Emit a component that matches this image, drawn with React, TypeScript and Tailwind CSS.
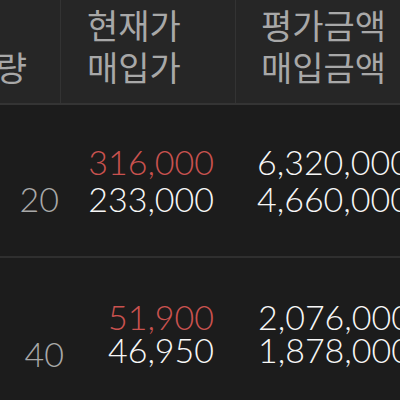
import React from "react";

const kr = { fontFamily: '"Noto Sans CJK KR", "Noto Sans", sans-serif' };
const lato = { fontFamily: '"Lato", sans-serif' };

export default function App() {
  return (
    <div className="w-[400px] h-[400px] overflow-hidden bg-[#1c1c1c]">
      {/* header */}
      <div className="flex h-[105px] bg-[#262626] border-b-2 border-[#343434] text-[34px] leading-[42px] text-[#a8a8a8]" style={kr}>
        <div className="w-[61px] shrink-0 overflow-hidden flex flex-col items-end pt-[4px] pr-[33px] border-r border-[#333]">
          <div className="whitespace-nowrap">&nbsp;</div>
          <div className="whitespace-nowrap">보유수량</div>
        </div>
        <div className="w-[175px] shrink-0 flex flex-col pt-[4px] pl-[26px] border-r border-[#333]">
          <div className="whitespace-nowrap">현재가</div>
          <div className="whitespace-nowrap">매입가</div>
        </div>
        <div className="flex-1 flex flex-col pt-[4px] pl-[25px] overflow-hidden">
          <div className="whitespace-nowrap">평가금액</div>
          <div className="whitespace-nowrap">매입금액</div>
        </div>
      </div>

      {/* row 1 */}
      <div className="flex h-[151px] text-[34px] leading-[37px] pt-[38px] font-light" style={lato}>
        <div className="w-[61px] shrink-0 flex flex-col items-end pr-[2px] text-[#a8a8a8]">
          <div>&nbsp;</div>
          <div>20</div>
        </div>
        <div className="w-[175px] shrink-0 flex flex-col items-end pr-[22px]">
          <div className="text-[#c9524f]">316,000</div>
          <div className="text-[#f7f7f7]">233,000</div>
        </div>
        <div className="flex-1 flex flex-col pl-[21px] overflow-hidden text-[#f7f7f7] whitespace-nowrap">
          <div>6,320,000</div>
          <div>4,660,000</div>
        </div>
      </div>
      <div className="h-[2px] bg-[#2f2f2f]" />

      {/* row 2 */}
      <div className="flex h-[151px] text-[34px] leading-[33px] pt-[42px] font-light" style={lato}>
        <div className="w-[64px] shrink-0 flex flex-col items-end pr-[0px] pt-[4px] text-[#a8a8a8]">
          <div>&nbsp;</div>
          <div>40</div>
        </div>
        <div className="w-[172px] shrink-0 flex flex-col items-end pr-[22px]">
          <div className="text-[#c9524f]">51,900</div>
          <div className="text-[#f7f7f7]">46,950</div>
        </div>
        <div className="flex-1 flex flex-col pl-[22px] overflow-hidden text-[#f7f7f7] whitespace-nowrap">
          <div>2,076,000</div>
          <div>1,878,000</div>
        </div>
      </div>
    </div>
  );
}
